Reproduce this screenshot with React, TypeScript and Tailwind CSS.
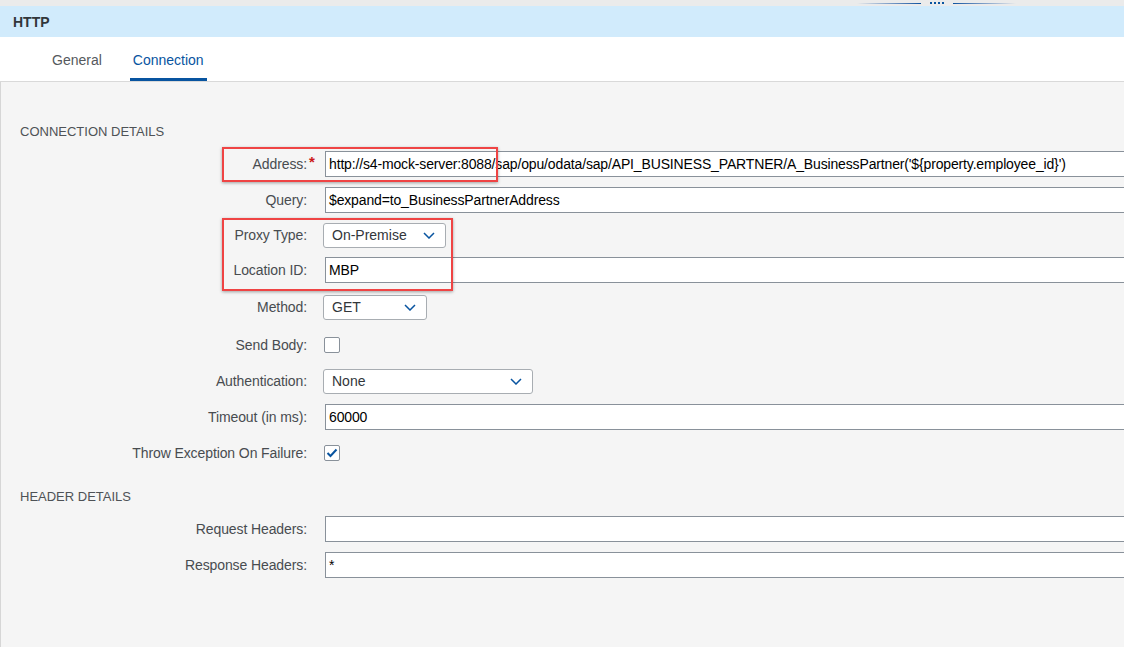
import React from 'react';

const font = { fontFamily: '"Liberation Sans", Arial, sans-serif' };

const Chevron = () => (
  <svg width="12" height="7" viewBox="0 0 12 7" className="shrink-0">
    <polyline points="1,1 6,6 11,1" fill="none" stroke="#0854a0" strokeWidth="1.5" />
  </svg>
);

const Label: React.FC<{ text: string; required?: boolean }> = ({ text, required }) => (
  <div className="relative w-[306px] shrink-0 text-right text-[14px] tracking-[-0.1px] text-[#484c50]">
    {text}
    {required && (
      <span className="absolute left-[308px] top-[-3px] text-[15px] font-bold text-[#cc1919]">*</span>
    )}
  </div>
);

const TextInput: React.FC<{ value: string }> = ({ value }) => (
  <div className="ml-[18px] flex h-[26px] w-[820px] shrink-0 items-center whitespace-nowrap border border-[#89919a] bg-white pl-[3px] pt-[1px] text-[14px] tracking-[-0.15px] text-black">
    {value}
  </div>
);

const Select: React.FC<{ value: string; width: string }> = ({ value, width }) => (
  <div
    className={`ml-[16px] flex h-[25px] shrink-0 items-center justify-between rounded-[3px] border border-[#a8adb2] bg-white pl-[8px] pr-[10px] text-[14px] text-[#32363a] ${width}`}
  >
    <span>{value}</span>
    <Chevron />
  </div>
);

const Checkbox: React.FC<{ checked?: boolean }> = ({ checked }) => (
  <div className="ml-[17px] flex h-[16px] w-[16px] items-center justify-center rounded-[2px] border border-[#89919a] bg-white">
    {checked && (
      <svg width="12" height="10" viewBox="0 0 12 10">
        <polyline points="1.5,5 4.5,8 10.5,1.5" fill="none" stroke="#0854a0" strokeWidth="2" />
      </svg>
    )}
  </div>
);

const Row: React.FC<{ mt: string; children: React.ReactNode }> = ({ mt, children }) => (
  <div className={`flex h-[26px] items-center ${mt}`}>{children}</div>
);

export default function App() {
  return (
    <div className="relative h-[647px] w-[1124px] overflow-hidden bg-[#f5f5f5]" style={font}>
      {/* drag handle strip */}
      <div className="flex h-[6px] items-center bg-[#ebebeb] pl-[857px]">
        <div className="h-px w-[64px] bg-gradient-to-r from-[#ebebeb] to-[#0854a0]" />
        <div className="ml-[9px] flex gap-[2px]">
          <div className="h-[2px] w-[2px] bg-[#0854a0]" />
          <div className="h-[2px] w-[2px] bg-[#0854a0]" />
          <div className="h-[2px] w-[2px] bg-[#0854a0]" />
          <div className="h-[2px] w-[2px] bg-[#0854a0]" />
        </div>
        <div className="ml-[9px] h-px w-[63px] bg-gradient-to-r from-[#0854a0] to-[#ebebeb]" />
      </div>

      {/* Header */}
      <div className="flex h-[31px] items-center bg-[#d1ebfc] pl-[13px] pt-[1px] text-[14px] font-bold text-[#32363a]">
        HTTP
      </div>

      {/* Tabs */}
      <div className="flex h-[45px] items-stretch border-b border-[#d9d9d9] bg-white pl-[52px] text-[14px]">
        <div className="flex items-center pt-[2px] text-[#55595d]">General</div>
        <div className="ml-[28px] flex items-center border-b-[3px] border-[#0854a0] px-[3px] pt-[5px] text-[#0854a0]">
          Connection
        </div>
      </div>

      {/* Body */}
      <div className="h-[565px] border-l border-[#d6d6d6]">
        <div className="pl-[19px] pt-[42px] text-[13px] leading-[16px] text-[#4e5256]">CONNECTION DETAILS</div>

        <Row mt="mt-[11px]">
          <Label text="Address:" required />
          <TextInput value="http://s4-mock-server:8088/sap/opu/odata/sap/API_BUSINESS_PARTNER/A_BusinessPartner('${property.employee_id}')" />
        </Row>
        <Row mt="mt-[10px]">
          <Label text="Query:" />
          <TextInput value="$expand=to_BusinessPartnerAddress" />
        </Row>
        <Row mt="mt-[9px]">
          <Label text="Proxy Type:" />
          <Select value="On-Premise" width="w-[123px]" />
        </Row>
        <Row mt="mt-[9px]">
          <Label text="Location ID:" />
          <TextInput value="MBP" />
        </Row>
        <Row mt="mt-[11px]">
          <Label text="Method:" />
          <Select value="GET" width="w-[104px]" />
        </Row>
        <Row mt="mt-[12px]">
          <Label text="Send Body:" />
          <Checkbox />
        </Row>
        <Row mt="mt-[10px]">
          <Label text="Authentication:" />
          <Select value="None" width="w-[210px]" />
        </Row>
        <Row mt="mt-[10px]">
          <Label text="Timeout (in ms):" />
          <TextInput value="60000" />
        </Row>
        <Row mt="mt-[10px]">
          <Label text="Throw Exception On Failure:" />
          <Checkbox checked />
        </Row>

        <div className="mt-[23px] pl-[19px] text-[13px] leading-[16px] text-[#4e5256]">HEADER DETAILS</div>

        <Row mt="mt-[11px]">
          <Label text="Request Headers:" />
          <TextInput value="" />
        </Row>
        <Row mt="mt-[10px]">
          <Label text="Response Headers:" />
          <TextInput value="*" />
        </Row>
      </div>

      {/* annotation boxes */}
      <div className="absolute left-[222px] top-[147px] h-[35px] w-[276px] border-2 border-[#ef4444] shadow-[0_1px_3px_rgba(0,0,0,0.35)]" />
      <div className="absolute left-[222px] top-[218px] h-[73px] w-[231px] border-2 border-[#ef4444] shadow-[0_1px_3px_rgba(0,0,0,0.35)]" />
    </div>
  );
}
